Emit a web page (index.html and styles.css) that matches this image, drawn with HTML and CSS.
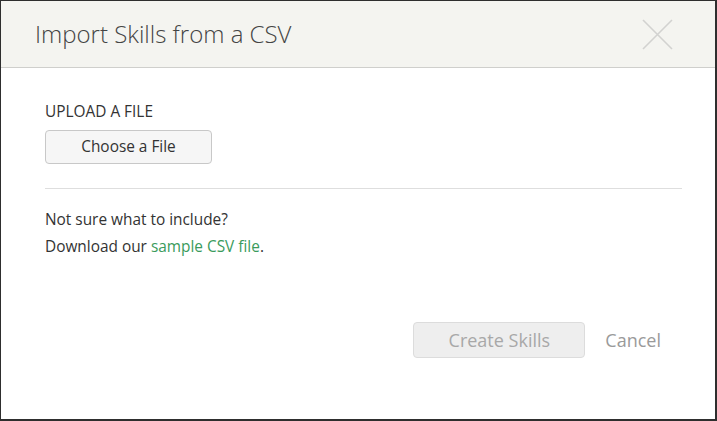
FILE: index.html
```html
<!DOCTYPE html>
<html>
<head>
<meta charset="utf-8">
<link rel="stylesheet" href="styles.css">
</head>
<body>
<div class="modal">
  <div class="modal-header">
    <h1 class="modal-title">Import Skills from a CSV</h1>
    <button class="close" aria-label="Close">
      <svg width="31" height="31" viewBox="0 0 31 31"><path d="M1 1 L30 30 M30 1 L1 30" stroke="#d2d2d0" stroke-width="1.6" fill="none"/></svg>
    </button>
  </div>
  <div class="modal-body">
    <div class="label">UPLOAD A FILE</div>
    <button class="btn btn-file">Choose a File</button>
    <hr class="divider">
    <p class="help">Not sure what to include?</p>
    <p class="help">Download our <a href="#" class="link">sample CSV file</a>.</p>
  </div>
  <div class="modal-footer">
    <button class="btn btn-create" disabled>Create Skills</button>
    <a href="#" class="cancel">Cancel</a>
  </div>
</div>
</body>
</html>
```
FILE: styles.css
```css
html, body {
  margin: 0;
  padding: 0;
  background: #2e2e2e;
  width: 717px;
  height: 421px;
  overflow: hidden;
}
body {
  font-family: "Open Sans", "Liberation Sans", sans-serif;
  color: #333;
}
.modal {
  margin: 1px 0 0 1px;
  width: 714px;
  height: 418px;
  background: #fff;
  display: flex;
  flex-direction: column;
}
.modal-header {
  height: 66px;
  background: #f4f4f0;
  border-bottom: 1px solid #cfcfcc;
  display: flex;
  align-items: center;
  justify-content: space-between;
  padding: 0 42px 0 34px;
}
.modal-title {
  margin: 0;
  font-weight: 300;
  font-size: 24px;
  color: #444;
  letter-spacing: 0;
  padding-bottom: 1px;
}
.close {
  border: 0;
  background: none;
  padding: 0;
  width: 31px;
  height: 31px;
  margin-top: 1px;
}
.close svg { display: block; }
.modal-body {
  padding: 34px 33px 0 44px;
}
.label {
  font-size: 15.4px;
  line-height: 20px;
  color: #333;
  margin-bottom: 8px;
}
.btn {
  font-family: "Open Sans", "Liberation Sans", sans-serif;
  border-radius: 4px;
  display: flex;
  align-items: center;
  justify-content: center;
}
.btn-file {
  width: 167px;
  height: 34px;
  background: #f6f6f6;
  border: 1px solid #c8c8c8;
  font-size: 15.4px;
  color: #333;
  padding: 0 0 1px;
}
.divider {
  border: 0;
  border-top: 1px solid #dedede;
  margin: 24px 0 17px;
}
.help {
  margin: 0;
  font-size: 15.4px;
  line-height: 27px;
  color: #333;
}
.link {
  color: #3a9b5c;
  text-decoration: none;
}
.modal-footer {
  margin-top: auto;
  padding: 0 54px 61px 0;
  display: flex;
  justify-content: flex-end;
  align-items: center;
}
.btn-create {
  width: 172px;
  height: 36px;
  background: #eeeeee;
  border: 1px solid #dcdcdc;
  color: #a8a8a8;
  font-size: 18px;
  padding: 0 0 1px;
}
.cancel {
  margin-left: 20px;
  font-size: 18px;
  color: #9a9a9a;
  text-decoration: none;
}
```
